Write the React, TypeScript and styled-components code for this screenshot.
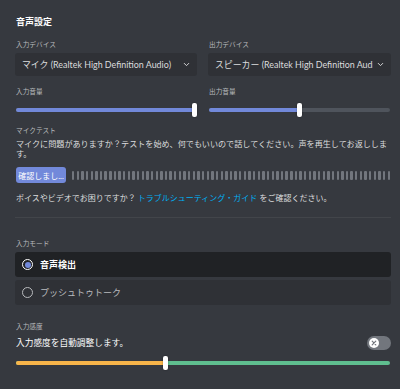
import React from "react";
import styled, { createGlobalStyle } from "styled-components";

const Global = createGlobalStyle`
  html, body { margin: 0; padding: 0; background: #36393f; }
  body { font-family: Lato, "Noto Sans CJK JP", sans-serif; color: #dcddde; }
  * { box-sizing: border-box; }
`;

const Page = styled.div`
  width: 400px;
  height: 389px;
  overflow: hidden;
  padding: 15px 9px 0 15px;
  background: #36393f;
`;

const Title = styled.div`
  font-size: 9px;
  font-weight: 700;
  color: #ffffff;
  line-height: 13px;
  margin-bottom: 11px;
  padding-left: 1px;
`;

const Label = styled.div<{ $mb?: number }>`
  font-size: 6.7px;
  color: #b9bbbe;
  line-height: 10px;
  margin-bottom: ${(p) => p.$mb ?? 4}px;
  padding-left: 1px;
`;

const Columns = styled.div`
  display: grid;
  grid-template-columns: 182px 183px;
  column-gap: 11px;
`;

const Select = styled.div`
  height: 23px;
  background: #2f3136;
  border-radius: 3px;
  display: flex;
  align-items: center;
  gap: 3px;
  padding: 0 6px 0 7px;
  font-size: 8.9px;
  color: #dcddde;
  white-space: nowrap;
  overflow: hidden;
  margin-bottom: 10px;
`;

const SelectText = styled.span`
  flex: 1;
  overflow: hidden;
  white-space: nowrap;
`;

const Track = styled.div<{ $bg: string; $mt: number }>`
  position: relative;
  height: 4px;
  border-radius: 2px;
  background: ${(p) => p.$bg};
  margin: ${(p) => p.$mt}px 1px 0 1px;
`;

const Fill = styled.div<{ $bg: string }>`
  position: absolute;
  left: 0;
  top: 0;
  bottom: 0;
  border-radius: 2px;
  background: ${(p) => p.$bg};
`;

const Thumb = styled.div`
  position: absolute;
  top: -5px;
  width: 5px;
  height: 14px;
  margin-left: -2.5px;
  background: #ffffff;
  border-radius: 2px;
  box-shadow: 0 0 2px rgba(0,0,0,0.4);
`;

const Text = styled.div<{ $color?: string; $bold?: boolean; $size?: number }>`
  font-size: ${(p) => p.$size ?? 8}px;
  line-height: 10px;
  color: ${(p) => p.$color ?? "#dcddde"};
  font-weight: ${(p) => (p.$bold ? 700 : 400)};
  padding-left: 1px;
`;

const Spacer = styled.div<{ $h: number }>`
  height: ${(p) => p.$h}px;
`;

const TestRow = styled.div`
  display: flex;
  align-items: center;
  gap: 6px;
  margin-top: 8px;
  margin-left: 1px;
`;

const Button = styled.div`
  width: 50px;
  height: 16px;
  background: #7289da;
  border-radius: 3px;
  color: #ffffff;
  font-size: 8px;
  display: flex;
  align-items: center;
  justify-content: center;
  white-space: nowrap;
`;

const Meter = styled.div`
  flex: 1;
  display: flex;
  justify-content: space-between;
  align-items: center;
  height: 10px;
`;

const Bar = styled.div`
  width: 2.4px;
  height: 9px;
  border-radius: 1px;
  background: #72767d;
`;

const Link = styled.span`
  color: #00b0f4;
`;

const Divider = styled.div`
  height: 1px;
  background: #42454a;
  margin: 14px 0 20px 0;
`;

const Radio = styled.div<{ $selected?: boolean }>`
  height: 25px;
  display: flex;
  align-items: center;
  gap: 6px;
  padding-left: 7px;
  border-radius: 3px;
  margin-bottom: 3px;
  background: ${(p) => (p.$selected ? "#202225" : "#2f3136")};
`;

const Circle = styled.div<{ $selected?: boolean }>`
  width: 11px;
  height: 11px;
  border-radius: 50%;
  border: 1.5px solid ${(p) => (p.$selected ? "#ffffff" : "#b9bbbe")};
  display: flex;
  align-items: center;
  justify-content: center;
  &::after {
    content: "";
    display: ${(p) => (p.$selected ? "block" : "none")};
    width: 6px;
    height: 6px;
    border-radius: 50%;
    background: #7289da;
  }
`;

const SensRow = styled.div`
  display: flex;
  align-items: center;
  justify-content: space-between;
  height: 14px;
`;

const Toggle = styled.div`
  width: 24px;
  height: 14px;
  border-radius: 7px;
  background: #72767d;
  display: flex;
  align-items: center;
  padding-left: 2px;
`;

const Knob = styled.div`
  width: 10px;
  height: 10px;
  border-radius: 50%;
  background: #ffffff;
  display: flex;
  align-items: center;
  justify-content: center;
`;

const Chevron = () => (
  <svg width="9" height="9" viewBox="0 0 24 24" style={{ flex: "none" }}>
    <path d="M6 9l6 6 6-6" fill="none" stroke="#dcddde" strokeWidth="2.5" strokeLinecap="round" strokeLinejoin="round" />
  </svg>
);

export default function App() {
  const bars = Array.from({ length: 69 });
  return (
    <Page>
      <Global />
      <Title>音声設定</Title>
      <Columns>
        <div>
          <Label>入力デバイス</Label>
          <Select>
            <SelectText>マイク (Realtek High Definition Audio)</SelectText>
            <Chevron />
          </Select>
          <Label $mb={0}>入力音量</Label>
          <Track $bg="#4f545c" $mt={12}>
            <Fill $bg="#7289da" style={{ width: "100%" }} />
            <Thumb style={{ left: "calc(100% - 2px)" }} />
          </Track>
        </div>
        <div>
          <Label>出力デバイス</Label>
          <Select>
            <SelectText>スピーカー (Realtek High Definition Audio)</SelectText>
            <Chevron />
          </Select>
          <Label $mb={0}>出力音量</Label>
          <Track $bg="#4f545c" $mt={12}>
            <Fill $bg="#7289da" style={{ width: "50%" }} />
            <Thumb style={{ left: "50%" }} />
          </Track>
        </div>
      </Columns>
      <Spacer $h={13} />
      <Label $mb={4}>マイクテスト</Label>
      <Text $size={8.1}>
        マイクに問題がありますか？テストを始め、何でもいいので話してください。声を再生してお返ししま
        <br />
        す。
      </Text>
      <TestRow>
        <Button>確認しまし...</Button>
        <Meter>
          {bars.map((_, i) => (
            <Bar key={i} />
          ))}
        </Meter>
      </TestRow>
      <Spacer $h={10} />
      <Text>
        ボイスやビデオでお困りですか？ <Link>トラブルシューティング・ガイド</Link> をご確認ください。
      </Text>
      <Divider />
      <Label $mb={4}>入力モード</Label>
      <Radio $selected>
        <Circle $selected />
        <Text $color="#ffffff" $bold $size={9}>音声検出</Text>
      </Radio>
      <Radio>
        <Circle />
        <Text $color="#b9bbbe" $size={9}>プッシュトゥトーク</Text>
      </Radio>
      <Spacer $h={13} />
      <Label $mb={5}>入力感度</Label>
      <SensRow>
        <Text $color="#ffffff" $size={8.7}>入力感度を自動調整します。</Text>
        <Toggle>
          <Knob>
            <svg width="6" height="6" viewBox="0 0 10 10">
              <path d="M2 2l6 6M8 2l-6 6" stroke="#72767d" strokeWidth="2" strokeLinecap="round" />
            </svg>
          </Knob>
        </Toggle>
      </SensRow>
      <Track $bg="#5fbe8f" $mt={11}>
        <Fill $bg="#f8b54a" style={{ width: "40%" }} />
        <Thumb style={{ left: "40%" }} />
      </Track>
    </Page>
  );
}
